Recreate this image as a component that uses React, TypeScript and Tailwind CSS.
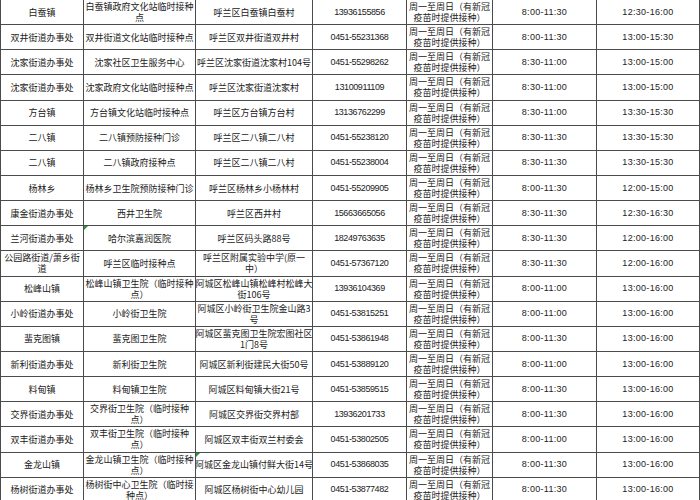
import React from 'react';

// each row: town, site, address, phone, days, morning, afternoon
// "|" marks a manual line break inside the cell
const rows: string[][] = [
  ['白蚕镇', '白蚕镇政府文化站临时接种|点', '呼兰区白蚕镇白蚕村', '13936155856', '8:00-11:30', '12:30-16:00'],
  ['双井街道办事处', '双井街道文化站临时接种点', '呼兰区双井街道双井村', '0451-55231368', '8:00-11:30', '13:00-15:30'],
  ['沈家街道办事处', '沈家社区卫生服务中心', '呼兰区沈家街道沈家村104号', '0451-55298262', '8:30-11:00', '13:00-15:00'],
  ['沈家街道办事处', '沈家政府文化站临时接种点', '呼兰区沈家街道沈家村', '13100911109', '8:30-11:00', '13:00-15:00'],
  ['方台镇', '方台镇文化站临时接种点', '呼兰区方台镇方台村', '13136762299', '8:30-11:00', '13:30-15:30'],
  ['二八镇', '二八镇预防接种门诊', '呼兰区二八镇二八村', '0451-55238120', '8:30-11:30', '13:30-15:30'],
  ['二八镇', '二八镇政府接种点', '呼兰区二八镇二八村', '0451-55238004', '8:30-11:30', '13:30-15:30'],
  ['杨林乡', '杨林乡卫生院预防接种门诊', '呼兰区杨林乡小杨林村', '0451-55209905', '8:00-11:30', '12:00-15:00'],
  ['康金街道办事处', '西井卫生院', '呼兰区西井村', '15663665056', '8:30-11:30', '12:30-16:30'],
  ['兰河街道办事处', '哈尔滨嘉润医院', '呼兰区码头路88号', '18249763635', '8:30-11:30', '12:00-16:00'],
  ['公园路街道/萧乡街|道', '呼兰区临时接种点', '呼兰区附属实验中学(原一|中）', '0451-57367120', '8:30-11:30', '12:00-16:00'],
  ['松峰山镇', '松峰山镇卫生院（临时接种|点）', '阿城区松峰山镇松峰村松峰大|街106号', '13936104369', '8:00-11:00', '13:00-16:00'],
  ['小岭街道办事处', '小岭街卫生院', '阿城区小岭街卫生院金山路3|号', '0451-53815251', '8:00-11:00', '13:00-16:00'],
  ['蜚克图镇', '蜚克图卫生院', '阿城区蜚克图卫生院宏图社区|1门8号', '0451-53861948', '8:00-11:30', '13:00-16:00'],
  ['新利街道办事处', '新利街卫生院', '阿城区新利街建民大街50号', '0451-53889120', '8:00-11:00', '13:00-16:00'],
  ['料甸镇', '料甸镇卫生院', '阿城区料甸镇大街21号', '0451-53859515', '8:00-11:30', '13:00-16:00'],
  ['交界街道办事处', '交界街卫生院（临时接种|点）', '阿城区交界街交界村部', '13936201733', '8:00-11:30', '13:00-16:00'],
  ['双丰街道办事处', '双丰街卫生院（临时接种|点）', '阿城区双丰街双兰村委会', '0451-53802505', '8:00-11:00', '13:00-16:00'],
  ['金龙山镇', '金龙山镇卫生院（临时接种|点）', '阿城区金龙山镇付鲜大街14号', '0451-53868035', '8:00-11:30', '13:00-16:00'],
  ['杨树街道办事处', '杨树街中心卫生院（临时接|种点）', '阿城区杨树街中心幼儿园', '0451-53877482', '8:00-11:30', '13:00-16:00'],
];

const DAYS = '周一至周日（有新冠|疫苗时提供接种）';

const cjk = "font-['Noto_Sans_CJK_SC','Noto_Sans',sans-serif]";
const phone = "font-['Liberation_Sans','Noto_Sans_CJK_SC',sans-serif] tracking-[-0.4px]";
const time = "font-['Liberation_Sans','Noto_Sans_CJK_SC',sans-serif] tracking-[0.3px]";

const Cell: React.FC<{ text: string; font?: string; mark?: boolean }> = ({ text, font = cjk, mark }) => {
  const lines = text.split('|');
  return (
    <div
      className={`relative flex flex-col items-center justify-center border-r border-b border-[#4b4b4b] text-center whitespace-nowrap overflow-hidden text-[9px] leading-[11px] text-[#222] ${font}`}
    >
      {mark && (
        <span className="absolute top-0 left-0 w-0 h-0 border-t-[4px] border-r-[4px] border-t-[#1e9a3a] border-r-transparent" />
      )}
      {lines.map((l, i) => (
        <span key={i}>{l}</span>
      ))}
    </div>
  );
};

export default function App() {
  return (
    <div className="w-[700px] h-[500px] overflow-hidden bg-white">
      <div className="grid grid-cols-[83px_112px_117px_94px_86px_104px_103px] auto-rows-[25.15px] border-l border-[#4b4b4b] w-[699px]">
        {rows.map((r, i) => (
          <React.Fragment key={i}>
            <Cell text={r[0]} />
            <Cell text={r[1]} mark={i === 9} />
            <Cell text={r[2]} mark={i === 18} />
            <Cell text={r[3]} font={phone} />
            <Cell text={DAYS} />
            <Cell text={r[4]} font={time} />
            <Cell text={r[5]} font={time} />
          </React.Fragment>
        ))}
      </div>
    </div>
  );
}
